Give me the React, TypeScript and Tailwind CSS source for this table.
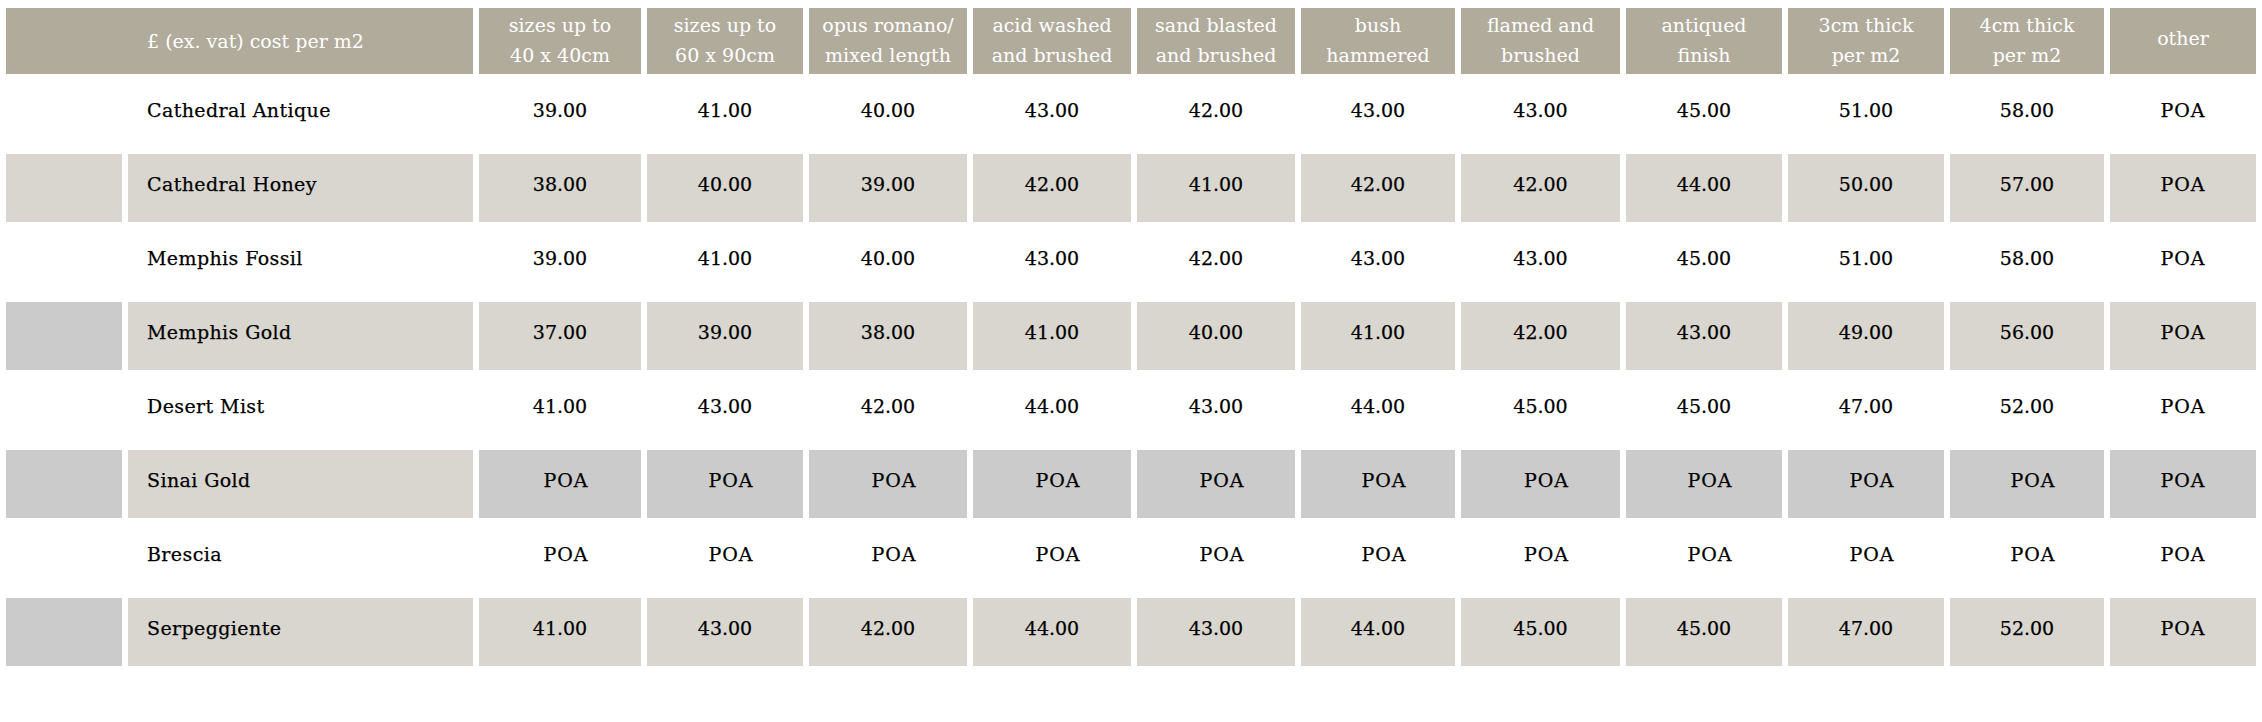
import React from "react";

type Row = {
  name: string;
  swatch: "white" | "beige" | "gray";
  fill: "white" | "beige" | "gray";
  prices: string[];
};

const headers: [string, string][] = [
  ["sizes up to", "40 x 40cm"],
  ["sizes up to", "60 x 90cm"],
  ["opus romano/", "mixed length"],
  ["acid washed", "and brushed"],
  ["sand blasted", "and brushed"],
  ["bush", "hammered"],
  ["flamed and", "brushed"],
  ["antiqued", "finish"],
  ["3cm thick", "per m2"],
  ["4cm thick", "per m2"],
];

const poa = Array(11).fill("POA");

const rows: Row[] = [
  {
    name: "Cathedral Antique",
    swatch: "white",
    fill: "white",
    prices: ["39.00", "41.00", "40.00", "43.00", "42.00", "43.00", "43.00", "45.00", "51.00", "58.00", "POA"],
  },
  {
    name: "Cathedral Honey",
    swatch: "beige",
    fill: "beige",
    prices: ["38.00", "40.00", "39.00", "42.00", "41.00", "42.00", "42.00", "44.00", "50.00", "57.00", "POA"],
  },
  {
    name: "Memphis Fossil",
    swatch: "white",
    fill: "white",
    prices: ["39.00", "41.00", "40.00", "43.00", "42.00", "43.00", "43.00", "45.00", "51.00", "58.00", "POA"],
  },
  {
    name: "Memphis Gold",
    swatch: "gray",
    fill: "beige",
    prices: ["37.00", "39.00", "38.00", "41.00", "40.00", "41.00", "42.00", "43.00", "49.00", "56.00", "POA"],
  },
  {
    name: "Desert Mist",
    swatch: "white",
    fill: "white",
    prices: ["41.00", "43.00", "42.00", "44.00", "43.00", "44.00", "45.00", "45.00", "47.00", "52.00", "POA"],
  },
  { name: "Sinai Gold", swatch: "gray", fill: "gray", prices: poa },
  { name: "Brescia", swatch: "white", fill: "white", prices: poa },
  {
    name: "Serpeggiente",
    swatch: "gray",
    fill: "beige",
    prices: ["41.00", "43.00", "42.00", "44.00", "43.00", "44.00", "45.00", "45.00", "47.00", "52.00", "POA"],
  },
];

const bg = {
  white: "bg-white",
  beige: "bg-[#d8d6cf]",
  gray: "bg-[#cbcbcb]",
};

export default function App() {
  return (
    <div className="min-h-[722px] w-[2262px] bg-white font-['DejaVu_Serif',serif] text-[19px]">
      <div className="grid grid-cols-[116px_345px_162px_156px_158px_158px_158px_154px_159px_156px_156px_154px_146px] gap-[6px] px-[6px] pt-[8px]">
        {/* header */}
        <div className="col-span-2 flex h-[66px] items-center bg-[#b1ab9c] pl-[141px] leading-[30px] text-white">
          £ (ex. vat) cost per m2
        </div>
        {headers.map(([a, b], i) => (
          <div
            key={i}
            className="flex h-[66px] flex-col items-center justify-center whitespace-nowrap bg-[#b1ab9c] pb-[2px] text-center leading-[30px] text-white"
          >
            <span>{a}</span>
            <span>{b}</span>
          </div>
        ))}
        <div className="flex h-[66px] items-center justify-center bg-[#b1ab9c] pb-[6px] leading-[30px] text-white">
          other
        </div>

        {/* rows */}
        {rows.map((row) => (
          <React.Fragment key={row.name}>
            <div className={`h-[68px] ${bg[row.swatch]}`} />
            <div
              className={`flex h-[68px] items-center pb-[7px] pl-[19px] tracking-[0.4px] text-black [-webkit-text-stroke:0.25px_#000] ${
                row.fill === "white" ? "bg-white" : "bg-[#d8d6cf]"
              }`}
            >
              {row.name}
            </div>
            {row.prices.map((p, i) => (
              <div
                key={i}
                className={`flex h-[68px] items-center justify-center pb-[7px] text-black [-webkit-text-stroke:0.25px_#000] ${bg[row.fill]} ${
                  p === "POA" && i < 10 ? "pl-[12px] tracking-[1px]" : ""
                } ${p === "POA" && i === 10 ? "tracking-[1px]" : ""}`}
              >
                {p}
              </div>
            ))}
          </React.Fragment>
        ))}
      </div>
    </div>
  );
}
